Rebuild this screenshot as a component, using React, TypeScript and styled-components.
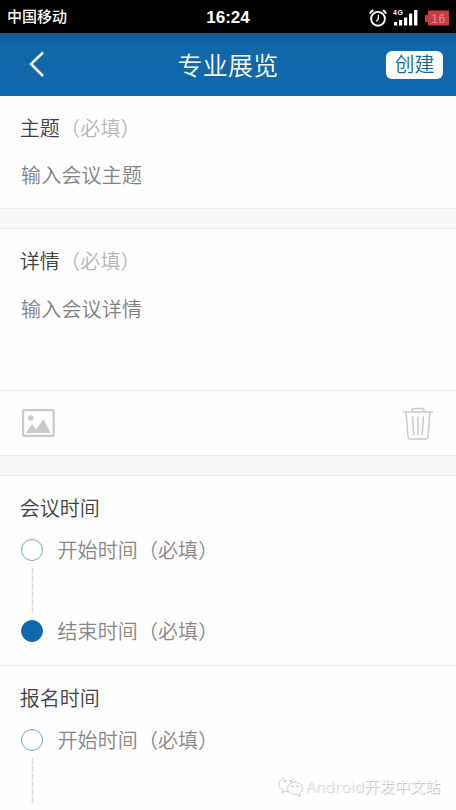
import React from "react";
import styled, { createGlobalStyle } from "styled-components";

const GlobalStyle = createGlobalStyle`
  * { box-sizing: border-box; }
  body {
    margin: 0;
    background: #fff;
    overflow: hidden;
    font-family: "Noto Sans CJK SC", "Liberation Sans", sans-serif;
  }
`;

const Screen = styled.div`
  position: relative;
  width: 456px;
  height: 810px;
  overflow: hidden;
  display: flex;
  flex-direction: column;
  background: #fefefe;
`;

const StatusBar = styled.div`
  flex: none;
  height: 33px;
  padding: 0 6px 0 7px;
  display: grid;
  grid-template-columns: 1fr auto 1fr;
  align-items: center;
  background: #000;
  color: #fff;
`;

const Carrier = styled.span`
  font-size: 15px;
  line-height: 32px;
  padding-bottom: 3px;
  font-weight: 500;
`;

const Clock = styled.span`
  font: bold 17px/33px "Liberation Sans", Arial, sans-serif;
  margin-right: 1px;
`;

const StatusIcons = styled.div`
  display: flex;
  justify-content: flex-end;
  align-items: center;
`;

const SignalSlot = styled.span`
  display: flex;
  margin: 0 5px 0 6px;
`;

const Header = styled.header`
  flex: none;
  height: 63px;
  padding: 0 13px 0 28px;
  display: grid;
  grid-template-columns: 1fr auto 1fr;
  align-items: center;
  background: linear-gradient(#0f5c99, #1067aa 14px, #1068ad);
  color: #fff;
`;

const Title = styled.h1`
  margin: 0 15px 2px 0;
  font-size: 25px;
  line-height: 60px;
  font-weight: 350;
  letter-spacing: 0.2px;
`;

const CreateButton = styled.button`
  justify-self: end;
  width: 57px;
  height: 28px;
  padding: 0 0 1px;
  border: 0;
  border-radius: 6px;
  background: #fff;
  color: #1067aa;
  font-family: inherit;
  font-size: 20px;
  line-height: 26px;
  font-weight: 350;
`;

const Section = styled.section<{ $height: number }>`
  flex: none;
  height: ${(p) => p.$height}px;
  padding: 0 20px;
  border-bottom: 1px solid #e9e9e9;
`;

const Spacer = styled.div`
  flex: none;
  height: 20px;
  background: #f8f8f8;
  border-bottom: 1px solid #ebebeb;
`;

const Label = styled.div`
  margin-left: -0.3px;
  padding-top: 17px;
  font-size: 20px;
  line-height: 30px;
  font-weight: 350;
  color: #404040;
`;

const Required = styled.span`
  margin-left: 0.3px;
  color: #b5b5b5;
  letter-spacing: 0.2px;
`;

const Placeholder = styled.div<{ $gap: number }>`
  padding: ${(p) => p.$gap}px 0 0 1px;
  font-size: 20px;
  line-height: 30px;
  letter-spacing: 0.2px;
  font-weight: 350;
  color: #808080;
`;

const Tools = styled.div`
  flex: none;
  height: 65px;
  padding: 0 22px;
  display: flex;
  align-items: center;
  justify-content: space-between;
  border-bottom: 1px solid #ebebeb;
`;

const Timeline = styled.div`
  padding-top: 12px;
`;

const TimeRow = styled.div`
  display: flex;
  align-items: center;
  height: 30px;
  font-size: 20px;
  line-height: 30px;
  letter-spacing: 0.1px;
  font-weight: 350;
  color: #868686;
`;

const Dot = styled.span<{ $filled?: boolean }>`
  width: 22px;
  height: 22px;
  margin: 0 15px 0 0.5px;
  border-radius: 50%;
  border: 1.5px solid ${(p) => (p.$filled ? "#1068ad" : "#70a9d5")};
  background: ${(p) => (p.$filled ? "#1068ad" : "#fff")};
`;

const Connector = styled.svg`
  display: block;
  margin: 3px 0 3px 11px;
`;

const Watermark = styled.div`
  position: absolute;
  left: 278px;
  top: 773px;
  display: flex;
  align-items: center;
  color: #fff;
  font-family: "Open Sans", "Noto Sans CJK SC", sans-serif;
  font-size: 15.2px;
  line-height: 26px;
  font-weight: 350;
  text-shadow: 1px 1px 1px #b8b8b8, 0 0 1px #ddd;
  white-space: nowrap;
`;

const Latin = styled.span`
  letter-spacing: 0.55px;
`;

const AlarmIcon = () => (
  <svg width="18" height="20" viewBox="0 0 18 20" fill="none" stroke="#fff">
    <circle cx="9" cy="10.8" r="6.9" strokeWidth="1.9" />
    <path d="M1 5.8Q1.8 3.1 4.3 2.2M13.7 2.2Q16.2 3.1 17 5.8" strokeWidth="2" />
    <path d="M9.4 6.8V11L7.3 13.4" strokeWidth="1.3" />
  </svg>
);

const SignalIcon = () => (
  <svg width="26" height="20" viewBox="0 0 26 20" fill="#fff">
    <text x="0" y="7" fontFamily="Liberation Sans" fontWeight="bold" fontSize="7" textLength="10">4G</text>
    <path d="M1 14h3.2v3.5H1zM6 12h3.2v5.5H6zM11 9.5h3.2v8H11zM16 5.5h3.2v12H16zM21 2h3.4v15.5H21z" />
  </svg>
);

const BatteryIcon = () => (
  <svg width="26" height="16" viewBox="0 0 26 16">
    <path d="M4 .5H25V15.5H4V12H1V5H4Z" fill="#c73c40" />
    <text x="7.3" y="12.5" fill="#e58b8d" fontFamily="Liberation Sans" fontSize="12" textLength="14">16</text>
  </svg>
);

const BackIcon = () => (
  <svg width="17" height="28" viewBox="0 0 17 28" fill="none" stroke="#fff" strokeWidth="2.5">
    <path d="M15 1.5 3 13 15 25" />
  </svg>
);

const PictureIcon = () => (
  <svg width="33" height="28" viewBox="0 0 33 28">
    <rect x="1.1" y="1.1" width="30.6" height="25.8" rx="1.5" fill="none" stroke="#c8c8cd" strokeWidth="2.1" />
    <circle cx="8.8" cy="9" r="2.8" fill="#c8c8cd" />
    <path d="M4 24 10 15 14 20.5 21.5 10.5 28.5 24Z" fill="#c8c8cd" />
  </svg>
);

const TrashIcon = () => (
  <svg width="32" height="33" viewBox="0 0 32 33" fill="none" stroke="#c9c9cd" strokeWidth="1.5">
    <path d="M1 5H31M10 4.5V3.5Q10 1.5 12 1.5H20Q22 1.5 22 3.5V4.5M4 5 6 30Q6.2 32 8 32H24Q25.8 32 26 30L28 5" />
    <path d="M10.5 9.5 11.8 28M16 9.5V28M21.5 9.5 20.2 28" />
  </svg>
);

const ChatIcon = () => (
  <svg width="28" height="26" viewBox="0 0 28 26" fill="none" stroke="#c4c4c4" strokeWidth="0.9">
    <path d="M6 4.7C-1 8-.2 14 4.8 17L4 19.6 7.4 18.2 10 18.6" />
    <path d="M17.5 8.8C16.5 6.8 14.5 5.3 12 4.6" stroke="#e2e2e2" />
    <path d="M17 9.3C12.5 9.3 9.5 12 9.5 15.4 9.5 19.3 13.5 21.9 18 21.2L22 23.4 21.2 20.4C23.4 19 24.5 17.4 24.5 15.4 24.5 12 21.2 9.3 17 9.3Z" />
    <g fill="#c0c0c0" stroke="none">
      <circle cx="6.8" cy="8.2" r="1.1" />
      <circle cx="12.8" cy="8.2" r="1.1" />
      <circle cx="14.5" cy="13.3" r="1" />
      <circle cx="19.5" cy="13.3" r="1" />
    </g>
  </svg>
);

const DashedLine = () => (
  <Connector width="3" height="45" viewBox="0 0 3 45">
    <path d="M1.5 0V45" stroke="#dcdcdc" strokeWidth="1.7" strokeDasharray="6.2 1.6" />
  </Connector>
);

export default function App() {
  return (
    <>
      <GlobalStyle />
      <Screen lang="zh-CN">
        <StatusBar>
          <Carrier>中国移动</Carrier>
          <Clock>16:24</Clock>
          <StatusIcons>
            <AlarmIcon />
            <SignalSlot><SignalIcon /></SignalSlot>
            <BatteryIcon />
          </StatusIcons>
        </StatusBar>
        <Header>
          <BackIcon />
          <Title>专业展览</Title>
          <CreateButton>创建</CreateButton>
        </Header>
        <Section $height={113}>
          <Label>主题<Required>（必填）</Required></Label>
          <Placeholder $gap={17}>输入会议主题</Placeholder>
        </Section>
        <Spacer />
        <Section $height={162}>
          <Label>详情<Required>（必填）</Required></Label>
          <Placeholder $gap={18}>输入会议详情</Placeholder>
        </Section>
        <Tools>
          <PictureIcon />
          <TrashIcon />
        </Tools>
        <Spacer />
        <Section $height={190}>
          <Label>会议时间</Label>
          <Timeline>
            <TimeRow><Dot />开始时间（必填）</TimeRow>
            <DashedLine />
            <TimeRow><Dot $filled />结束时间（必填）</TimeRow>
          </Timeline>
        </Section>
        <Section $height={190}>
          <Label>报名时间</Label>
          <Timeline>
            <TimeRow><Dot />开始时间（必填）</TimeRow>
            <DashedLine />
          </Timeline>
        </Section>
        <Watermark><ChatIcon /><Latin>Android</Latin>开发中文站</Watermark>
      </Screen>
    </>
  );
}
